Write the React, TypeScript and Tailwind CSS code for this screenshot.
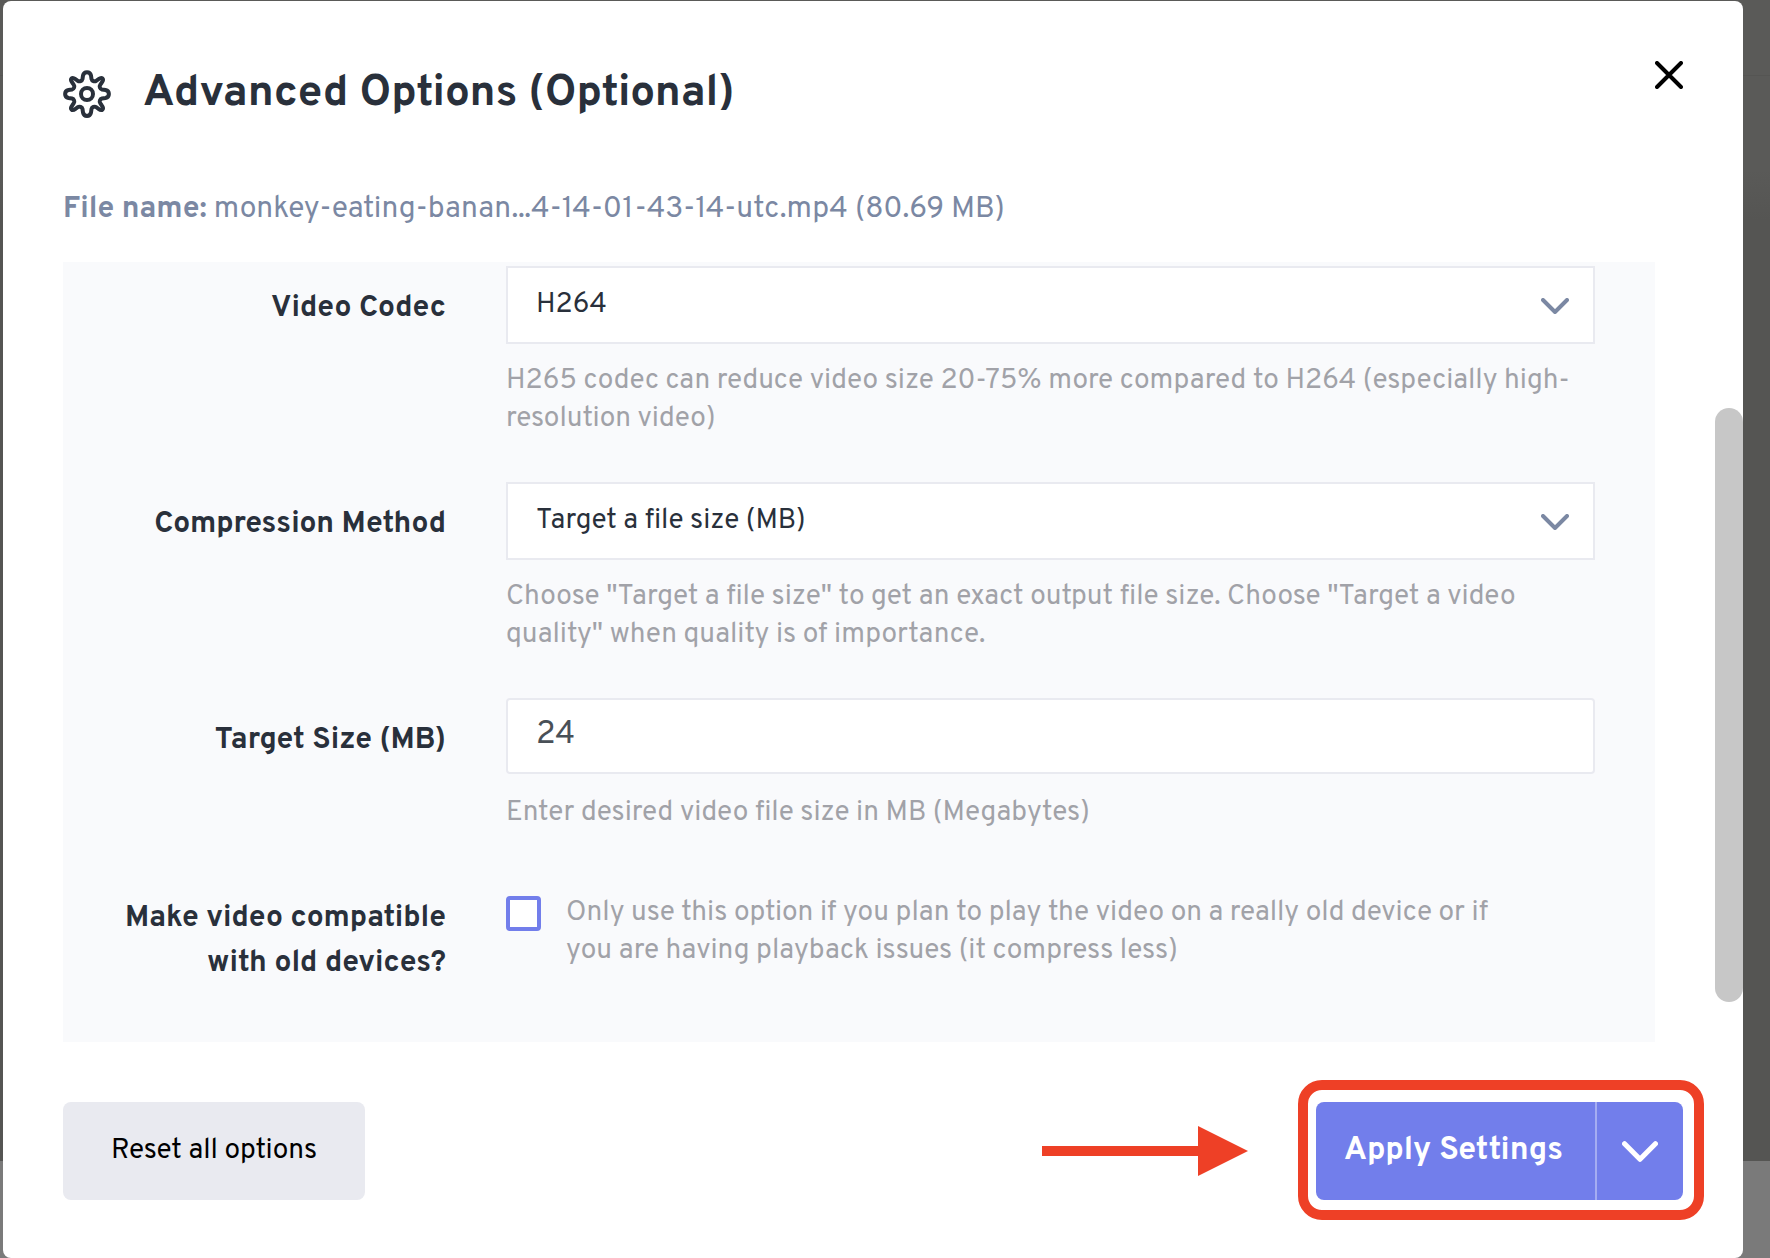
import type { ReactNode } from "react";

const fieldBorder = "border-2 border-[#e9eaf0] bg-white";
const labelText = "w-[383px] shrink-0 pt-5 text-right text-[30px] leading-[45px] font-bold text-[#29303b]";
const hintText = "text-[28px] leading-[38px] text-[#a1a2a8]";

const GearIcon = () => (
  <svg viewBox="0 0 48 48" className="size-12 shrink-0" fill="none" stroke="#29303b" strokeWidth="4" strokeLinejoin="round" aria-hidden="true">
    <path d="M20 5.5C21 1 27 1 28 5.5L28.5 9C29 11 31.5 12 33.2 10.8L35.5 9.2C39 6.5 41.5 9 38.8 12.5L37.2 14.8C36 16.5 37 19 39 19.5L42.5 20C47 21 47 27 42.5 28L39 28.5C37 29 36 31.5 37.2 33.2L38.8 35.5C41.5 39 39 41.5 35.5 38.8L33.2 37.2C31.5 36 29 37 28.5 39L28 42.5C27 47 21 47 20 42.5L19.5 39C19 37 16.5 36 14.8 37.2L12.5 38.8C9 41.5 6.5 39 9.2 35.5L10.8 33.2C12 31.5 11 29 9 28.5L5.5 28C1 27 1 21 5.5 20L9 19.5C11 19 12 16.5 10.8 14.8L9.2 12.5C6.5 9 9 6.5 12.5 9.2L14.8 10.8C16.5 12 19 11 19.5 9Z" />
    <circle cx="24" cy="24" r="6" />
  </svg>
);

const Chevron = ({ className }: { className: string }) => (
  <svg viewBox="0 0 28 16" className={className} fill="none" stroke="currentColor" strokeWidth="4" strokeLinecap="round" strokeLinejoin="round" aria-hidden="true">
    <path d="M2 2l12 12L26 2" />
  </svg>
);

function Row({ id, label, hint, children }: { id: string; label: string; hint: string; children: ReactNode }) {
  return (
    <div className="flex gap-[60px]">
      <label htmlFor={id} className={labelText}>
        {label}
      </label>
      <div className="flex min-w-0 flex-1 flex-col">
        {children}
        <p className={`mt-[18px] ${hintText}`}>{hint}</p>
      </div>
    </div>
  );
}

function SelectField({ id, options }: { id: string; options: string[] }) {
  return (
    <div className="relative">
      <select id={id} className={`block h-[78px] w-full appearance-none pr-20 pl-7 text-[28px] text-[#29303b] ${fieldBorder}`}>
        {options.map((option) => (
          <option key={option}>{option}</option>
        ))}
      </select>
      <Chevron className="pointer-events-none absolute top-8 right-[26px] h-4 w-7 text-[#7b88a3]" />
    </div>
  );
}

export default function App() {
  return (
    <div className="flex min-h-screen bg-[linear-gradient(#5a5a58_0,#5a5a58_75px,#555553_75px,#555553_76px,#5a5a58_76px,#5a5a58_170px,#555553_220px,#555553_1161px,#7a7a7a_1161px)] pt-px pr-[27px] pl-[3px] font-[Overpass,Roboto,sans-serif]">
      <main role="dialog" aria-labelledby="dialog-title" className="relative flex-1 rounded-lg bg-white px-[60px]">
        <header className="flex items-start justify-between pt-[60px]">
          <div className="flex items-center gap-8 pt-[5px]">
            <GearIcon />
            <h1 id="dialog-title" className="text-[44px] leading-[56px] font-bold text-[#29303b]">
              Advanced Options (Optional)
            </h1>
          </div>
          <button type="button" aria-label="Close">
            <svg viewBox="0 0 28 28" className="size-7" fill="none" stroke="#000" strokeWidth="4" strokeLinecap="round" aria-hidden="true">
              <path d="M2 2l24 24M26 2L2 26" />
            </svg>
          </button>
        </header>

        <p className="mt-[65px] text-[30px] leading-[45px] text-[#7b88a3]">
          <strong className="font-bold">File name:</strong> monkey-eating-banan...4-14-01-43-14-utc.mp4 (80.69 MB)
        </p>

        <form className="mt-[30px] mr-7 flex flex-col gap-11 bg-[#f9fafc] pt-1 pr-[60px] pb-14">
          <Row id="codec" label="Video Codec" hint="H265 codec can reduce video size 20-75% more compared to H264 (especially high-resolution video)">
            <SelectField id="codec" options={["H264", "H265"]} />
          </Row>
          <Row
            id="method"
            label="Compression Method"
            hint={'Choose "Target a file size" to get an exact output file size. Choose "Target a video quality" when quality is of importance.'}
          >
            <SelectField id="method" options={["Target a file size (MB)", "Target a video quality"]} />
          </Row>
          <Row id="size" label="Target Size (MB)" hint="Enter desired video file size in MB (Megabytes)">
            <input id="size" type="text" defaultValue="24" className={`mb-0.5 h-[76px] w-full rounded px-7 pb-0.5 text-[32px] text-[#495057] ${fieldBorder}`} />
          </Row>
          <div className="flex gap-[60px]">
            <label htmlFor="compat" className={`pl-14 ${labelText}`}>
              Make video compatible with old devices?
            </label>
            <div className="flex min-w-0 flex-1 gap-[25px] pt-[18px] pr-[60px]">
              <input id="compat" type="checkbox" aria-describedby="compat-hint" className="mt-0.5 size-[35px] shrink-0 appearance-none rounded border-4 border-[#727eeb] bg-white" />
              <p id="compat-hint" className={hintText}>
                Only use this option if you plan to play the video on a really old device or if you are having playback issues (it compress less)
              </p>
            </div>
          </div>
        </form>

        <footer className="flex items-center justify-between pt-[60px]">
          <button type="button" className="h-[98px] rounded-lg bg-[#e9eaf0] px-12 text-[28px] text-black">
            Reset all options
          </button>
          <div className="flex items-center gap-[68px]">
            <svg viewBox="0 0 206 50" className="h-[50px] w-[206px]" fill="#ee4026" aria-hidden="true">
              <path d="M0 20h156V0l50 25-50 25V30H0z" />
            </svg>
            <div className="relative flex h-[98px] rounded-lg bg-[#727eeb] text-white">
              <button type="button" className="pr-8 pl-7 text-[32px] font-bold">
                Apply Settings
              </button>
              <button type="button" aria-label="More apply options" className="flex w-[88px] items-center justify-center border-l-2 border-[#a5adf2]">
                <Chevron className="h-[21px] w-9" />
              </button>
              <span className="pointer-events-none absolute -top-[22px] -right-[21px] -bottom-5 -left-[18px] rounded-3xl border-10 border-[#ee4026]" />
            </div>
          </div>
        </footer>
        <div className="absolute top-[407px] right-0 h-[594px] w-7 rounded-full bg-[#c7c7c7]" />
      </main>
    </div>
  );
}
